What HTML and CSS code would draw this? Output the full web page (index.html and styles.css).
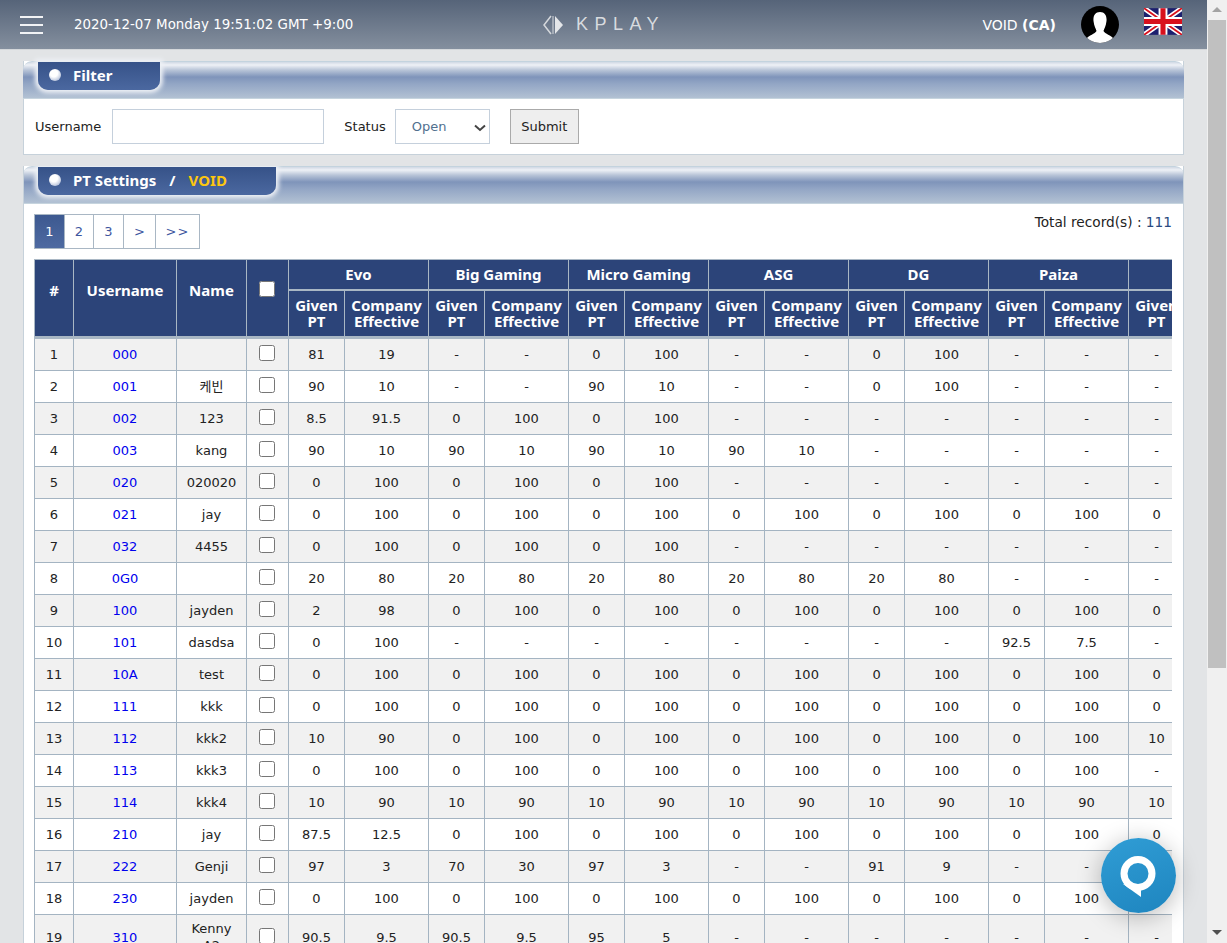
FILE: index.html
```html
<!DOCTYPE html>
<html lang="en">
<head>
  <meta charset="UTF-8">
  <title>PT Settings</title>
  <link rel="stylesheet" href="styles.css">
</head>
<body>
<div class="app">
  <div class="page">
    <header class="topbar">
      <div class="topbar-left">
        <div class="burger"><span></span><span></span><span></span></div>
        <div class="clock">2020-12-07 Monday 19:51:02 GMT +9:00</div>
      </div>
      <div class="logo">
        <svg width="23" height="20" viewBox="0 0 23 20"><path d="M8 1 L1 10 L8 19" fill="none" stroke="#d5d8dc" stroke-width="1.5"/><path d="M10 1 V19" stroke="#d5d8dc" stroke-width="1"/><path d="M12 1 L12 19 L20 10 Z" fill="#e4e6e9"/></svg>
        <span>KPLAY</span>
      </div>
      <div class="topbar-right">
        <div class="user">VOID <b>(CA)</b></div>
        <svg class="avatar" width="38" height="37" viewBox="0 0 38 37"><defs><clipPath id="av"><ellipse cx="19" cy="18.5" rx="19" ry="18.5"/></clipPath></defs><ellipse cx="19" cy="18.5" rx="19" ry="18.5" fill="#000"/><g clip-path="url(#av)" fill="#fff"><path d="M19 6 C14 6 12 10 12.500 15 C13 20 15 23 15.500 25 C14 28 8 29 5 33 L5 38 L33 38 L33 33 C30 29 24 28 22.500 25 C23 23 25 20 25.500 15 C26 10 24 6 19 6 Z"/></g></svg>
        <svg class="flag" width="38" height="27" viewBox="0 0 60 42"><rect width="60" height="42" fill="#1c1f6e"/><path d="M0 0 L60 42 M60 0 L0 42" stroke="#fff" stroke-width="8"/><path d="M0 0 L60 42 M60 0 L0 42" stroke="#d8101c" stroke-width="3"/><path d="M30 0 V42 M0 21 H60" stroke="#fff" stroke-width="14"/><path d="M30 0 V42 M0 21 H60" stroke="#d8101c" stroke-width="8"/></svg>
      </div>
    </header>

    <main class="content">
      <section class="panel">
        <div class="panel-head"><div class="panel-tab"><i class="dot"></i>Filter</div></div>
        <form class="filter">
          <label class="filter-label" for="username">Username</label>
          <input class="filter-input" type="text" id="username">
          <label class="filter-label status-label" for="status">Status</label>
          <select class="filter-select" id="status"><option>Open</option></select>
          <button class="submit" type="button">Submit</button>
        </form>
      </section>

      <section class="panel panel-grow">
        <div class="panel-head"><div class="panel-tab"><i class="dot"></i><span>PT Settings</span><em class="sep">/</em><em class="crumb">VOID</em></div></div>
        <div class="panel-body">
          <div class="list-top">
            <div class="pager"><a class="active">1</a><a>2</a><a class="third">3</a><a class="next">&gt;</a><a class="last">&gt;&gt;</a></div>
            <div class="total">Total record(s) : <span>111</span></div>
          </div>
          <div class="table-wrap">
            <table class="grid">
              <colgroup>
                <col class="c-num"><col class="c-user"><col class="c-name"><col class="c-check">
                <col class="c-given"><col class="c-comp"><col class="c-given"><col class="c-comp"><col class="c-given"><col class="c-comp">
                <col class="c-given"><col class="c-comp"><col class="c-given"><col class="c-comp"><col class="c-given"><col class="c-comp">
                <col class="c-given"><col class="c-comp">
              </colgroup>
              <thead>
                <tr class="head-top">
                  <th rowspan="2">#</th><th rowspan="2">Username</th><th rowspan="2">Name</th><th rowspan="2"><input type="checkbox"></th>
                  <th colspan="2">Evo</th><th colspan="2">Big Gaming</th><th colspan="2">Micro Gaming</th><th colspan="2">ASG</th><th colspan="2">DG</th><th colspan="2">Paiza</th><th colspan="2">Sexy</th>
                </tr>
                <tr class="head-sub">
                  <th>Given PT</th><th>Company Effective</th><th>Given PT</th><th>Company Effective</th><th>Given PT</th><th>Company Effective</th><th>Given PT</th><th>Company Effective</th><th>Given PT</th><th>Company Effective</th><th>Given PT</th><th>Company Effective</th><th>Given PT</th><th>Company Effective</th>
                </tr>
              </thead>
              <tbody>
                <tr><td>1</td><td><a>000</a></td><td></td><td><input type="checkbox"></td><td>81</td><td>19</td><td>-</td><td>-</td><td>0</td><td>100</td><td>-</td><td>-</td><td>0</td><td>100</td><td>-</td><td>-</td><td>-</td><td>-</td></tr>
                <tr><td>2</td><td><a>001</a></td><td>케빈</td><td><input type="checkbox"></td><td>90</td><td>10</td><td>-</td><td>-</td><td>90</td><td>10</td><td>-</td><td>-</td><td>0</td><td>100</td><td>-</td><td>-</td><td>-</td><td>-</td></tr>
                <tr><td>3</td><td><a>002</a></td><td>123</td><td><input type="checkbox"></td><td>8.5</td><td>91.5</td><td>0</td><td>100</td><td>0</td><td>100</td><td>-</td><td>-</td><td>-</td><td>-</td><td>-</td><td>-</td><td>-</td><td>-</td></tr>
                <tr><td>4</td><td><a>003</a></td><td>kang</td><td><input type="checkbox"></td><td>90</td><td>10</td><td>90</td><td>10</td><td>90</td><td>10</td><td>90</td><td>10</td><td>-</td><td>-</td><td>-</td><td>-</td><td>-</td><td>-</td></tr>
                <tr><td>5</td><td><a>020</a></td><td>020020</td><td><input type="checkbox"></td><td>0</td><td>100</td><td>0</td><td>100</td><td>0</td><td>100</td><td>-</td><td>-</td><td>-</td><td>-</td><td>-</td><td>-</td><td>-</td><td>-</td></tr>
                <tr><td>6</td><td><a>021</a></td><td>jay</td><td><input type="checkbox"></td><td>0</td><td>100</td><td>0</td><td>100</td><td>0</td><td>100</td><td>0</td><td>100</td><td>0</td><td>100</td><td>0</td><td>100</td><td>0</td><td>100</td></tr>
                <tr><td>7</td><td><a>032</a></td><td>4455</td><td><input type="checkbox"></td><td>0</td><td>100</td><td>0</td><td>100</td><td>0</td><td>100</td><td>-</td><td>-</td><td>-</td><td>-</td><td>-</td><td>-</td><td>-</td><td>-</td></tr>
                <tr><td>8</td><td><a>0G0</a></td><td></td><td><input type="checkbox"></td><td>20</td><td>80</td><td>20</td><td>80</td><td>20</td><td>80</td><td>20</td><td>80</td><td>20</td><td>80</td><td>-</td><td>-</td><td>-</td><td>-</td></tr>
                <tr><td>9</td><td><a>100</a></td><td>jayden</td><td><input type="checkbox"></td><td>2</td><td>98</td><td>0</td><td>100</td><td>0</td><td>100</td><td>0</td><td>100</td><td>0</td><td>100</td><td>0</td><td>100</td><td>0</td><td>100</td></tr>
                <tr><td>10</td><td><a>101</a></td><td>dasdsa</td><td><input type="checkbox"></td><td>0</td><td>100</td><td>-</td><td>-</td><td>-</td><td>-</td><td>-</td><td>-</td><td>-</td><td>-</td><td>92.5</td><td>7.5</td><td>-</td><td>-</td></tr>
                <tr><td>11</td><td><a>10A</a></td><td>test</td><td><input type="checkbox"></td><td>0</td><td>100</td><td>0</td><td>100</td><td>0</td><td>100</td><td>0</td><td>100</td><td>0</td><td>100</td><td>0</td><td>100</td><td>0</td><td>100</td></tr>
                <tr><td>12</td><td><a>111</a></td><td>kkk</td><td><input type="checkbox"></td><td>0</td><td>100</td><td>0</td><td>100</td><td>0</td><td>100</td><td>0</td><td>100</td><td>0</td><td>100</td><td>0</td><td>100</td><td>0</td><td>100</td></tr>
                <tr><td>13</td><td><a>112</a></td><td>kkk2</td><td><input type="checkbox"></td><td>10</td><td>90</td><td>0</td><td>100</td><td>0</td><td>100</td><td>0</td><td>100</td><td>0</td><td>100</td><td>0</td><td>100</td><td>10</td><td>90</td></tr>
                <tr><td>14</td><td><a>113</a></td><td>kkk3</td><td><input type="checkbox"></td><td>0</td><td>100</td><td>0</td><td>100</td><td>0</td><td>100</td><td>0</td><td>100</td><td>0</td><td>100</td><td>0</td><td>100</td><td>-</td><td>-</td></tr>
                <tr><td>15</td><td><a>114</a></td><td>kkk4</td><td><input type="checkbox"></td><td>10</td><td>90</td><td>10</td><td>90</td><td>10</td><td>90</td><td>10</td><td>90</td><td>10</td><td>90</td><td>10</td><td>90</td><td>10</td><td>90</td></tr>
                <tr><td>16</td><td><a>210</a></td><td>jay</td><td><input type="checkbox"></td><td>87.5</td><td>12.5</td><td>0</td><td>100</td><td>0</td><td>100</td><td>0</td><td>100</td><td>0</td><td>100</td><td>0</td><td>100</td><td>0</td><td>100</td></tr>
                <tr><td>17</td><td><a>222</a></td><td>Genji</td><td><input type="checkbox"></td><td>97</td><td>3</td><td>70</td><td>30</td><td>97</td><td>3</td><td>-</td><td>-</td><td>91</td><td>9</td><td>-</td><td>-</td><td>-</td><td>-</td></tr>
                <tr><td>18</td><td><a>230</a></td><td>jayden</td><td><input type="checkbox"></td><td>0</td><td>100</td><td>0</td><td>100</td><td>0</td><td>100</td><td>0</td><td>100</td><td>0</td><td>100</td><td>0</td><td>100</td><td>-</td><td>-</td></tr>
                <tr><td>19</td><td><a>310</a></td><td>Kenny<br>A2</td><td><input type="checkbox"></td><td>90.5</td><td>9.5</td><td>90.5</td><td>9.5</td><td>95</td><td>5</td><td>-</td><td>-</td><td>-</td><td>-</td><td>-</td><td>-</td><td>-</td><td>-</td></tr>
              </tbody>
            </table>
          </div>
        </div>
      </section>
    </main>
  </div>

  <div class="scrollbar">
    <div class="arrow up"></div>
    <div class="thumb"></div>
    <div class="track"></div>
    <div class="arrow down"></div>
  </div>
</div>

<div class="chat">
  <svg width="75" height="75" viewBox="0 0 75 75"><circle cx="37" cy="35.500" r="14" fill="none" stroke="#fff" stroke-width="7"/><path d="M22 46 L40 59 L40 48 Z" fill="#fff"/></svg>
</div>
</body>
</html>
```

FILE: styles.css
```css
* {
  box-sizing: border-box;
}
html, body {
  margin: 0;
  height: 100%;
  overflow: hidden;
}
body {
  font-family: "DejaVu Sans", "Noto Sans CJK KR", sans-serif;
  font-size: 13px;
  color: #222;
  background: #e2e4e6;
}
.app {
  display: flex;
  height: 100vh;
}
.page {
  flex: 1;
  min-width: 0;
  display: flex;
  flex-direction: column;
}

/* top bar */
.topbar {
  height: 50px;
  flex: none;
  display: flex;
  align-items: center;
  background: linear-gradient(#566479, #848f9e);
  border-bottom: 1px solid #d4d7da;
  color: #fff;
}
.topbar-left {
  flex: 1;
  display: flex;
  align-items: center;
  padding-left: 20px;
}
.burger {
  width: 23px;
  margin-right: 31px;
}
.burger span {
  display: block;
  height: 2px;
  background: #f2f3f5;
  margin: 6px 0;
}
.clock {
  font-size: 13.4px;
}
.logo {
  display: flex;
  align-items: center;
  gap: 10px;
  color: #d8dbdf;
  font-family: "Liberation Sans", sans-serif;
  font-size: 18px;
  letter-spacing: 6.5px;
}
.logo span {
  margin-right: -6px;
}
.topbar-right {
  flex: 1;
  display: flex;
  align-items: center;
  justify-content: flex-end;
  padding-right: 25px;
}
.user {
  margin-right: 25px;
  font-size: 14px;
}
.flag {
  margin: -6px 0 0 25px;
}

/* panels */
.content {
  flex: 1;
  min-height: 0;
  padding: 11px 23px 0;
  display: flex;
  flex-direction: column;
  gap: 11px;
}
.panel {
  flex: none;
  background: #fff;
  border: 1px solid #c6d1da;
  border-top: 0;
}
.panel-grow {
  flex: 1;
  min-height: 0;
  border-bottom: 0;
  overflow: hidden;
}
.panel-head {
  height: 38px;
  margin: 0 -1px;
  padding-left: 15px;
  border-top: 1px solid #c3d3de;
  border-bottom: 1px solid #c6d4de;
  border-radius: 9px 9px 0 0;
  background: linear-gradient(#d0d8e4 0, #eef1f6 3px, #b9c5d8 8px, #7f94ba 15px, #93a6c5 22px, #b2c1d3 100%);
}
.panel-tab {
  display: inline-flex;
  align-items: center;
  height: 28px;
  padding: 0 48px 2px 11px;
  border-radius: 0 0 10px 10px;
  background: linear-gradient(#365288, #4b68a0);
  box-shadow: 0 0 4px 3px #edf0f5;
  color: #fff;
  font-family: "Noto Sans", sans-serif;
  font-size: 15px;
  font-weight: 700;
}
.dot {
  width: 12px;
  height: 12px;
  margin: 0 12px 0 0;
  border-radius: 50%;
  background: radial-gradient(circle at 40% 35%, #fff 35%, #b9c4dc 75%, #6f82ab);
}
.panel-tab em {
  font-style: normal;
}
.sep {
  margin: 0 13px;
}
.crumb {
  color: #fdc70f;
  margin-right: 1px;
}

/* filter */
.filter {
  display: flex;
  align-items: center;
  height: 55px;
  padding-left: 11px;
}
.filter-label {
  margin-right: 11px;
}
.status-label {
  margin-left: 20px;
  margin-right: 9px;
}
.filter-input,
.filter-select {
  height: 35px;
  background: #fff;
  border: 1px solid #c5d0dc;
  font: inherit;
}
.filter-input {
  width: 212px;
}
.filter-select {
  width: 95px;
  padding-left: 16px;
  color: #51708f;
  appearance: none;
  background: #fff url("data:image/svg+xml,%3Csvg xmlns='http://www.w3.org/2000/svg' width='14' height='8'%3E%3Cpath d='M2 1.500 L7 6 L12 1.500' fill='none' stroke='%23444' stroke-width='2'/%3E%3C/svg%3E") no-repeat 77px 14px;
}
.submit {
  width: 69px;
  height: 35px;
  margin-left: 20px;
  border: 1px solid #aaa;
  background: #eee;
  font: inherit;
  color: #222;
}

/* list */
.panel-body {
  padding: 10px 11px 0 10px;
}
.list-top {
  display: flex;
  justify-content: space-between;
  align-items: flex-start;
  margin-bottom: 10px;
}
.pager {
  display: flex;
  border: 1px solid #a9b7c4;
  height: 35px;
}
.pager a {
  width: 29px;
  line-height: 33px;
  text-align: center;
  color: #3e56a0;
  border-left: 1px solid #a9b7c4;
}
.pager a:first-child {
  border-left: 0;
}
.pager a.active {
  background: linear-gradient(#3d5990, #4e6aa1);
  color: #fff;
}
.pager .third {
  width: 30px;
}
.pager .next {
  width: 32px;
}
.pager .last {
  width: 44px;
  letter-spacing: 1px;
}
.total {
  font-size: 13.7px;
}
.total span {
  color: #2a4a80;
}
.table-wrap {
  overflow: hidden;
}

/* grid */
.grid {
  width: 1234px;
  table-layout: fixed;
  border-collapse: collapse;
  text-align: center;
}
.c-num { width: 39px; }
.c-user { width: 103px; }
.c-name { width: 70px; }
.c-check { width: 42px; }
.c-given { width: 56px; }
.c-comp { width: 84px; }
.grid th {
  background: #2c4479;
  color: #fff;
  border: 1px solid #a9b7c4;
  padding: 0;
  font-family: "Noto Sans", sans-serif;
  font-size: 15px;
  line-height: 16px;
  overflow: hidden;
}
.head-top th {
  height: 30px;
}
.head-sub th {
  height: 48px;
  border-top-width: 2px;
  border-bottom-width: 3px;
}
.grid th[rowspan] {
  padding-bottom: 16px;
  border-bottom-width: 3px;
}
.grid td {
  height: 32px;
  padding: 5px 4px;
  line-height: 17px;
  border: 1px solid #a4b4c2;
  background: #fff;
}
.grid tbody tr:first-child td {
  height: 33px;
}
.grid tbody tr:nth-child(odd) td {
  background: #f1f1f1;
}
.grid td a {
  color: #0000ee;
}
.grid input {
  width: 16px;
  height: 16px;
  margin: 0 2px 3px 0;
  vertical-align: middle;
}

/* page scrollbar */
.scrollbar {
  width: 20px;
  flex: none;
  display: flex;
  flex-direction: column;
  background: #f0f0f0;
}
.arrow {
  height: 20px;
  flex: none;
  position: relative;
}
.arrow::after {
  content: "";
  position: absolute;
  left: 5px;
  top: 7px;
  border-left: 5px solid transparent;
  border-right: 5px solid transparent;
}
.up::after {
  border-bottom: 5px solid #a3a3a3;
}
.down::after {
  border-top: 5px solid #505050;
}
.thumb {
  height: 648px;
  flex: none;
  margin: 0 1px;
  background: #c0c0c0;
}
.track {
  flex: 1;
}

/* chat button */
.chat {
  position: fixed;
  left: 1101px;
  top: 838px;
  width: 75px;
  height: 75px;
  border-radius: 50%;
  background: linear-gradient(160deg, #309dd5, #1e85bf);
  box-shadow: 0 4px 24px rgba(0, 0, 0, 0.28);
}
```
